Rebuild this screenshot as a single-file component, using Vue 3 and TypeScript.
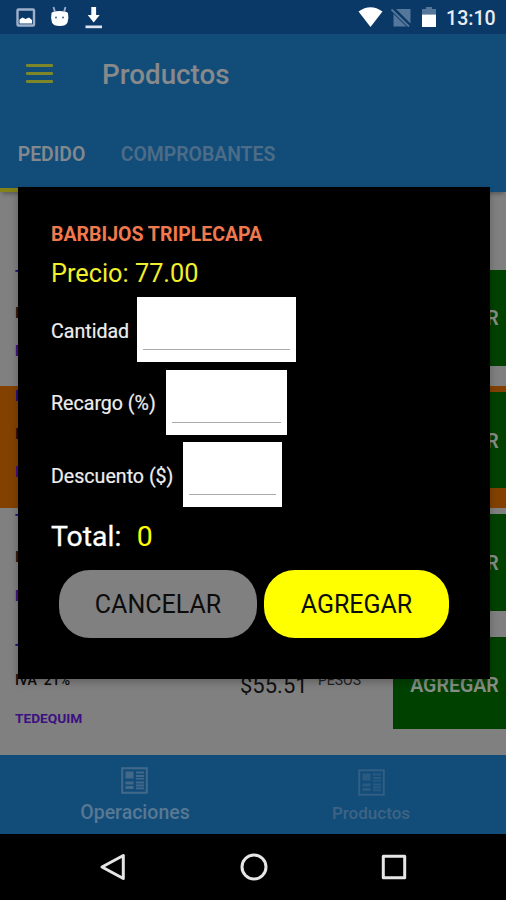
<script setup lang="ts">
import { reactive } from 'vue'

interface Product {
  name: string
  iva: string
  brand: string
  price: string
  highlighted?: boolean
  last?: boolean
}

interface Field {
  key: string
  label: string
  value: string
}

const products: Product[] = [
  { name: 'T', iva: 'IVA 21%', brand: 'B', price: '77.00' },
  { name: 'B', iva: 'IVA 21%', brand: 'B', price: '77.00', highlighted: true },
  { name: 'T', iva: 'IVA 21%', brand: 'B', price: '77.00' },
  { name: 'T', iva: 'IVA  21%', brand: 'TEDEQUIM', price: '55.51', last: true },
]

const fields = reactive<Field[]>([
  { key: 'cantidad', label: 'Cantidad', value: '' },
  { key: 'recargo', label: 'Recargo (%)', value: '' },
  { key: 'descuento', label: 'Descuento ($)', value: '' },
])
</script>

<template>
  <div class="screen">
    <header class="status">
      <svg class="status-left" viewBox="0 0 120 34">
        <rect x="17.5" y="9.5" width="16.5" height="16" rx="1" fill="none" stroke="#9fb0cb" stroke-width="2.4" />
        <path d="M19.5 23.5v-4l3-2 3 1.500 3.500-1.500 3 2.500v3.500z" fill="#fff" />
        <path d="M51.500 13Q52.500 11 59.500 11T68 13Q69 18 67.500 22.500Q66 26 59.700 26T52 22.500Q50.500 18 51.500 13z" fill="#fff" />
        <path d="M53.500 7l1.500 5M65.500 7l-1.500 5" stroke="#9fb0cb" stroke-width="1.800" />
        <circle cx="56" cy="17.500" r="1" fill="#40638c" />
        <circle cx="63" cy="17.500" r="1" fill="#40638c" />
        <path d="M91.300 7h4.800v8h3.600l-6 7.500-6-7.500h3.600z" fill="#fff" />
        <path d="M85.500 25.500h16.500v2.700H85.500z" fill="#dce5f0" />
      </svg>
      <svg class="status-right" viewBox="0 0 90 34">
        <path d="M2.500 11.500Q14.500 3 26.500 11.500L14.500 27z" fill="#fff" />
        <path d="M40 9h14.500v14.500zM37.500 14v12.500h13z" fill="#56779c" />
        <path d="M37 8.500l17.500 17.500" stroke="#0b3967" stroke-width="2.500" />
        <path d="M35.500 9.500l17.500 17" stroke="#56779c" stroke-width="1.800" />
        <path d="M66 9h4V7h6v2h4v5.500H66z" fill="#56779c" />
        <path d="M66 14.500h14V27H66z" fill="#fff" />
      </svg>
      <span class="clock">13:10</span>
    </header>

    <div class="toolbar">
      <div class="burger"><i></i><i></i><i></i></div>
      <h1>Productos</h1>
    </div>

    <nav class="tabs">
      <span class="tab active"><b>PEDIDO</b></span>
      <span class="tab"><b>COMPROBANTES</b></span>
    </nav>

    <main class="list">
      <article
        v-for="(p, i) in products"
        :key="i"
        class="row"
        :class="{ highlighted: p.highlighted, last: p.last }"
      >
        <div class="info">
          <span class="name">{{ p.name }}</span>
          <span class="iva">{{ p.iva }}</span>
          <span class="brand">{{ p.brand }}</span>
        </div>
        <span class="price">${{ p.price }}</span>
        <span class="currency">PESOS</span>
        <button class="add">AGREGAR</button>
      </article>
    </main>

    <footer class="bottom">
      <div class="item current">
        <svg viewBox="0 0 27 27">
          <path class="frame" d="M1.200 1.200h24.600v24.600H1.200z" />
          <path d="M4.500 4.500h8v7h-8zM15 4.500h8v2h-8zM15 8h8v2h-8zM15 11h8v1.500h-8zM4.500 14.500h8v3h-8zM4.500 19h8v3h-8zM15 14.500h8v2h-8zM15 17.500h8v2h-8zM15 20.500h8v1.800h-8z" />
        </svg>
        <span>Operaciones</span>
      </div>
      <div class="item">
        <svg viewBox="0 0 27 27">
          <path class="frame" d="M1.200 1.200h24.600v24.600H1.200z" />
          <path d="M4.500 4.500h8v7h-8zM15 4.500h8v2h-8zM15 8h8v2h-8zM15 11h8v1.500h-8zM4.500 14.500h8v3h-8zM4.500 19h8v3h-8zM15 14.500h8v2h-8zM15 17.500h8v2h-8zM15 20.500h8v1.800h-8z" />
        </svg>
        <span>Productos</span>
      </div>
    </footer>

    <div class="navbar">
      <svg viewBox="0 0 30 30"><path d="M25.300 3.500v23L4 15z" /></svg>
      <svg viewBox="0 0 30 30"><circle cx="15" cy="15" r="12" /></svg>
      <svg viewBox="0 0 30 30"><path d="M4.300 4.300h21.400v21.400H4.300z" /></svg>
    </div>

    <section class="dialog">
      <h2>BARBIJOS TRIPLECAPA</h2>
      <p class="unit-price">Precio: 77.00</p>
      <div class="fields">
        <label v-for="f in fields" :key="f.key" class="field" :class="f.key">
          <span>{{ f.label }}</span>
          <div class="box"><input v-model="f.value" type="text" /></div>
        </label>
      </div>
      <p class="total"><span>Total:</span><span class="amount">0</span></p>
      <div class="actions">
        <button class="cancel">CANCELAR</button>
        <button class="confirm">AGREGAR</button>
      </div>
    </section>
  </div>
</template>

<style>
body {
  margin: 0;
  background: #000;
}
</style>

<style scoped>
* {
  box-sizing: border-box;
}
.screen {
  position: relative;
  display: flex;
  flex-direction: column;
  width: 506px;
  height: 900px;
  overflow: hidden;
  background: #808080;
  font-family: Roboto, sans-serif;
  white-space: pre;
}
h1,
h2,
p {
  margin: 0;
}
button {
  border: 0;
  padding: 0;
  font-family: inherit;
}
svg {
  display: block;
}
.status {
  display: flex;
  flex: none;
  align-items: center;
  height: 34px;
  background: #0b3967;
}
.status-left {
  width: 120px;
  height: 34px;
}
.status-right {
  width: 90px;
  height: 34px;
  margin-left: auto;
}
.clock {
  width: 60px;
  padding-top: 3px;
  color: #e8edf3;
  font-size: 19.600px;
  font-weight: 500;
}
.toolbar {
  display: flex;
  flex: none;
  align-items: center;
  height: 81px;
  padding-left: 26px;
  background: #124d7a;
}
.burger {
  display: flex;
  flex-direction: column;
  gap: 4.500px;
  width: 27px;
  margin-top: -2px;
}
.burger i {
  height: 3.200px;
  border-radius: 1px;
  background: #7f8529;
}
h1 {
  margin-left: 49px;
  color: #87898b;
  font-size: 27.800px;
  font-weight: 500;
  line-height: 32px;
  padding-top: 1px;
}
.tabs {
  display: flex;
  flex: none;
  height: 77px;
  background: #124d7a;
  box-shadow: 0 4px 4px -2px rgba(0, 0, 0, 0.3);
  z-index: 1;
}
.tab {
  display: flex;
  align-items: center;
  justify-content: center;
  width: 103px;
  color: #4c6c87;
  font-size: 19.400px;
}
.tab b {
  font-weight: 600;
}
.tab + .tab {
  width: 189px;
  padding: 1px 0 0 1px;
}
.active {
  border-bottom: 4px solid #828219;
  padding-top: 5px;
  color: #82888e;
}
.list {
  flex: 1;
  padding-top: 71.500px;
}
.row {
  display: grid;
  grid-template-columns: 225px 77px 91px 113px;
  height: 122.400px;
  padding-top: 6px;
}
.highlighted {
  background: #824100;
}
.info {
  display: flex;
  flex-direction: column;
  padding-left: 15px;
  font-size: 14px;
  font-weight: 700;
  line-height: 20px;
}
.name {
  height: 23px;
  color: #1b0e80;
}
.row .name {
  margin-top: -4px;
}
.highlighted .name {
  margin-top: -6px;
}
.highlighted .iva {
  margin-top: 15px;
}
.iva {
  margin-top: 14px;
  color: #0b0b0b;
  font-weight: 500;
}
.brand {
  margin-top: 18.500px;
  color: #3b1080;
}
.last .name {
  margin-top: 3px;
}
.last .iva {
  margin-top: 7px;
}
.last .brand {
  font-size: 13.700px;
}
.price {
  padding: 36px 0 0 15px;
  color: #101010;
  font-size: 22px;
  line-height: 26px;
}
.currency {
  padding: 33px 0 0 16px;
  color: #222;
  font-size: 14px;
  line-height: 20px;
}
.add {
  height: 96.500px;
  padding: 2px 0 0 10px;
  background: #004100;
  color: #868e86;
  font-size: 19.600px;
  font-weight: 600;
}
.last .add {
  height: 92.500px;
  padding-top: 5px;
}
.bottom {
  display: flex;
  flex: none;
  height: 79px;
  background: #124d7a;
  z-index: 1;
}
.item {
  display: flex;
  flex-direction: column;
  align-items: center;
  width: 236px;
  padding-top: 13.500px;
  color: #3d6484;
  font-size: 17px;
  font-weight: 500;
  line-height: 22px;
}
.item svg {
  width: 27px;
  height: 27px;
  fill: #2b5a80;
}
.item span {
  margin-top: 6.500px;
}
.item .frame {
  fill: none;
  stroke: #315e82;
  stroke-width: 2;
}
.current {
  width: 253px;
  padding: 12px 0 0 17px;
  color: #587893;
  font-size: 19.500px;
}
.current svg {
  margin-left: -1px;
  fill: #426989;
}
.current span {
  margin-top: 7.500px;
}
.current .frame {
  stroke: #426989;
}
.navbar {
  display: flex;
  flex: none;
  gap: 110.500px;
  height: 66px;
  padding: 17.500px 0 0 98px;
  background: #000;
}
.navbar svg {
  width: 30px;
  height: 30px;
  fill: none;
  stroke: #e6e6e6;
  stroke-width: 3;
  stroke-linejoin: round;
}
.dialog {
  position: absolute;
  top: 187px;
  left: 18px;
  width: 471.500px;
  height: 492px;
  padding: 36px 0 0 33px;
  background: #000;
  box-shadow: 0 3px 8px rgba(0, 0, 0, 0.25);
  z-index: 2;
}
h2 {
  color: #f0794e;
  font-size: 19.500px;
  font-weight: 700;
  line-height: 24px;
}
.unit-price {
  margin-top: 3px;
  color: #f1f12b;
  font-size: 25.300px;
  line-height: 47px;
}
.fields {
  display: flex;
  flex-direction: column;
  gap: 7.500px;
}
.field {
  display: flex;
  align-items: center;
  height: 65px;
  color: #eee;
  font-size: 19.600px;
}
.field span {
  flex: none;
  width: 86px;
  padding-top: 3px;
  -webkit-text-stroke: 0.200px #eee;
}
.box {
  width: 158.500px;
  height: 65px;
  padding: 0 6px;
  background: #fff;
}
.box input {
  display: block;
  width: 100%;
  height: 53px;
  padding: 0;
  border: 0;
  border-bottom: 1.500px solid #aaa;
  outline: 0;
  background: transparent;
}
.recargo span {
  width: 114.500px;
}
.recargo .box {
  width: 121.500px;
}
.descuento span {
  width: 131.500px;
}
.descuento .box {
  width: 99px;
}
.total {
  display: flex;
  gap: 15.500px;
  color: #fff;
  font-size: 28.400px;
  line-height: 59px;
}
.total span:first-child {
  -webkit-text-stroke: 0.300px #fff;
}
.amount {
  color: #ff0;
}
.actions {
  display: flex;
  gap: 7px;
  padding: 4px 0 0 8px;
}
.actions button {
  width: 198px;
  height: 68px;
  border-radius: 31px;
  padding-top: 1px;
  background: #808080;
  color: #0c0c0c;
  font-size: 25px;
}
.actions .confirm {
  width: 185px;
  background: #ff0;
}
</style>
